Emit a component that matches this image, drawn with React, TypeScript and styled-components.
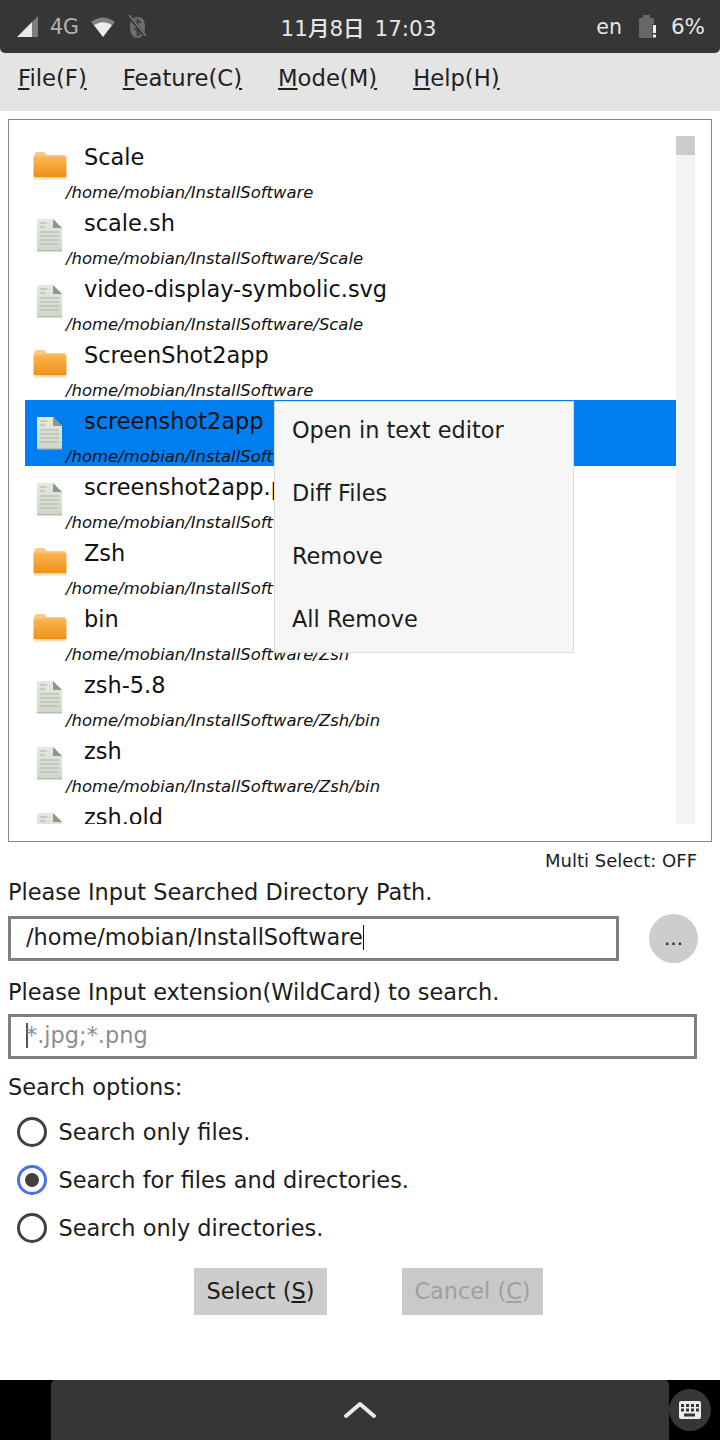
import styled, { createGlobalStyle } from "styled-components";

const GlobalStyle = createGlobalStyle`
  html, body {
    margin: 0;
    padding: 0;
    background: #fff;
  }
  * {
    box-sizing: border-box;
  }
`;

const Screen = styled.div`
  width: 720px;
  height: 1440px;
  display: flex;
  flex-direction: column;
  overflow: hidden;
  background: #fff;
  color: #1c1c1c;
  font-family: "DejaVu Sans", "Noto Sans CJK JP", sans-serif;
`;

const TopWrap = styled.div`
  background: #e4e4e4;
`;

const StatusBar = styled.header`
  height: 53px;
  padding: 0 15px 0 17px;
  display: grid;
  grid-template-columns: 1fr auto 1fr;
  align-items: center;
  background: #363636;
  border-radius: 0 0 5px 5px;
  color: #e6e6e6;
`;

const StatusGroup = styled.div<{ $end?: boolean }>`
  display: flex;
  align-items: center;
  justify-content: ${(p) => (p.$end ? "flex-end" : "flex-start")};
  gap: ${(p) => (p.$end ? "15px" : "12px")};
`;

const NetLabel = styled.span`
  font-size: 20.5px;
  color: #b4b4b4;
`;

const Clock = styled.span`
  margin-right: 5px;
  font-size: 21.5px;
  font-weight: 500;
  word-spacing: 3px;
`;

const Lang = styled.span`
  margin-right: 2px;
  font-size: 20.5px;
  font-weight: 500;
`;

const Percent = styled.span`
  font-size: 21.5px;
  font-weight: 500;
`;

const MenuBar = styled.nav`
  height: 58px;
  padding: 9px 0 0 18px;
  display: flex;
  gap: 36px;
  background: #e4e4e4;
`;

const MenuItem = styled.span`
  font-size: 22.7px;
  line-height: 32px;
  color: #222;
`;

const Main = styled.main`
  flex: 1;
  display: flex;
  flex-direction: column;
  padding: 8px 8px 0;
  position: relative;
`;

const ListFrame = styled.section`
  height: 723px;
  padding: 16px;
  padding-bottom: 17px;
  display: flex;
  border: 1px solid #888;
`;

const ListScroll = styled.div`
  flex: 1;
  overflow: hidden;
`;

const Row = styled.div<{ $selected?: boolean }>`
  height: 66px;
  display: grid;
  grid-template-columns: 59px 1fr;
  grid-template-rows: 41px 25px;
  background: ${(p) => (p.$selected ? "#007ef0" : "transparent")};
  white-space: nowrap;
`;

const IconCell = styled.div`
  grid-column: 1;
  grid-row: 1 / 3;
  padding: 15px 0 0 8px;
`;

const FileName = styled.div`
  grid-column: 2;
  grid-row: 1;
  font-size: 22.45px;
  line-height: 43px;
  color: #111;
`;

const FilePath = styled.div`
  grid-column: 1 / 3;
  grid-row: 2;
  padding-left: 41px;
  font-size: 16.45px;
  line-height: 32px;
  font-style: italic;
  color: #111;
`;

const ScrollTrack = styled.div`
  width: 19px;
  margin-left: -1px;
  background: #f3f3f3;
`;

const ScrollThumb = styled.div`
  height: 19px;
  background: #cbcbcb;
`;

const ContextMenu = styled.ul`
  position: absolute;
  left: 274px;
  top: 290px;
  width: 300px;
  height: 252px;
  margin: 0;
  padding: 0;
  list-style: none;
  background: #f6f6f6;
  border: 1px solid #dcdcdc;
`;

const ContextItem = styled.li`
  height: 63px;
  padding-left: 17px;
  font-size: 22.4px;
  line-height: 56px;
  color: #1c1c1c;
`;

const MultiSelect = styled.div`
  height: 36px;
  padding-right: 15px;
  text-align: right;
  font-size: 18px;
  line-height: 38px;
`;

const FieldLabel = styled.label`
  display: block;
  margin-bottom: 2px;
  font-size: 22.45px;
  line-height: 28px;
`;

const ExtensionLabel = styled(FieldLabel)`
  margin-bottom: 8px;
`;

const OptionsLabel = styled(FieldLabel)`
  margin-top: 14px;
`;

const PathRow = styled.div`
  display: flex;
  align-items: center;
  justify-content: space-between;
  padding-right: 14px;
  height: 54px;
  margin: 3px 0 13px;
`;

const InputBox = styled.div<{ $wide?: boolean }>`
  width: ${(p) => (p.$wide ? "689px" : "611px")};
  height: 45px;
  padding-left: 15px;
  border: 3px solid #808080;
  font-size: 22.45px;
  line-height: 37px;
  white-space: nowrap;
`;

const Caret = styled.span<{ $muted?: boolean }>`
  display: inline-block;
  width: 1.5px;
  height: 25px;
  margin-bottom: -5px;
  margin-right: ${(p) => (p.$muted ? "-1.5px" : "0")};
  background: ${(p) => (p.$muted ? "#555" : "#111")};
`;

const Placeholder = styled.span`
  color: #8e8e8e;
`;

const BrowseButton = styled.button`
  width: 49px;
  height: 49px;
  padding: 0;
  border: 0;
  border-radius: 50%;
  background: #cdcdcd;
  color: #222;
  font-family: inherit;
  font-size: 20px;
`;

const RadioGroup = styled.div`
  margin-top: 5px;
  display: flex;
  flex-direction: column;
`;

const RadioRow = styled.div`
  height: 48px;
  padding-left: 8px;
  display: flex;
  align-items: center;
  gap: 12px;
  font-size: 22.45px;
`;

const RadioMark = styled.span<{ $checked?: boolean }>`
  width: 30px;
  height: 30px;
  margin-left: 0.5px;
  display: flex;
  align-items: center;
  justify-content: center;
  border-radius: 50%;
  border: 3px solid ${(p) => (p.$checked ? "#4a6ff0" : "#404040")};
  &::after {
    content: "";
    display: ${(p) => (p.$checked ? "block" : "none")};
    width: 14px;
    height: 14px;
    border-radius: 50%;
    background: #404040;
  }
`;

const ButtonRow = styled.div`
  margin-top: 16px;
  padding-left: 186px;
  display: flex;
  gap: 75px;
`;

const ActionButton = styled.button<{ $disabled?: boolean }>`
  height: 47px;
  padding: 0 12.5px 2px;
  border: 0;
  background: ${(p) => (p.$disabled ? "#c9c9c9" : "#cdcdcd")};
  color: ${(p) => (p.$disabled ? "#a0a0a0" : "#1c1c1c")};
  font-family: inherit;
  font-size: 22.4px;
`;

const BottomBar = styled.footer`
  height: 60px;
  flex-shrink: 0;
  padding-left: 51px;
  display: flex;
  background: #000;
`;

const HandlePanel = styled.div`
  width: 618px;
  display: flex;
  align-items: center;
  justify-content: center;
  background: #363636;
  border-radius: 5px 5px 0 0;
`;

const KeyboardButton = styled.div`
  width: 42px;
  height: 42px;
  margin-top: 9px;
  display: flex;
  align-items: center;
  justify-content: center;
  border-radius: 50%;
  background: #363636;
`;

const SignalIcon = () => (
  <svg width="21" height="21" viewBox="0 0 21 21">
    <path d="M0 21 L15 21 L15 6 Z" fill="#e8e8e8" />
    <path d="M15 21 L21 21 L21 0 L15 6 Z" fill="#7c7c7c" />
  </svg>
);

const WifiIcon = () => (
  <svg width="24" height="20" viewBox="0 0 24 20">
    <path d="M0 5 Q12 -4 24 5 L12 20 Z" fill="#808080" />
    <path d="M3 8 Q12 2.5 21 8 L12 20 Z" fill="#ededed" />
  </svg>
);

const BluetoothIcon = () => (
  <svg width="21" height="24" viewBox="0 0 21 24">
    <path d="M10.5 2 C16 2 18 6 18 12 C18 19 15 23 10.5 23 C6 23 3 19 3 12 C3 6 5 2 10.5 2 Z" fill="#6e6e6e" />
    <path d="M7 13 L14 18 L10.5 20.5 L10.5 5 L14 8" fill="none" stroke="#363636" strokeWidth="1.5" />
    <path d="M2 1 L19 22" stroke="#363636" strokeWidth="3.5" />
    <path d="M2 0 L19 21" stroke="#787878" strokeWidth="1.5" />
  </svg>
);

const BatteryIcon = () => (
  <svg width="17" height="23" viewBox="0 0 17 23">
    <rect x="0" y="3" width="15" height="20" rx="1" fill="#686868" />
    <rect x="4" y="0" width="7" height="3" fill="#686868" />
    <rect x="13.5" y="9" width="4" height="14" fill="#363636" />
    <rect x="14" y="10" width="3" height="8" fill="#f0f0f0" />
    <rect x="14" y="19.5" width="3" height="3" fill="#f0f0f0" />
  </svg>
);

const SoftSvg = styled.svg`
  display: block;
  filter: blur(0.7px);
`;

const FolderIcon = () => (
  <SoftSvg width="34" height="30" viewBox="0 0 34 30">
    <defs>
      <linearGradient id="folderFill" x1="0" y1="0" x2="0" y2="1">
        <stop offset="0" stopColor="#f9b655" />
        <stop offset="1" stopColor="#ee9016" />
      </linearGradient>
    </defs>
    <path d="M3 1 L11 1 L14 4 L32 4 L32 9 L1 9 L1 4 Z" fill="#f7c987" />
    <rect x="0.5" y="5.5" width="33" height="21" rx="1" fill="url(#folderFill)" />
    <rect x="1" y="26.5" width="32" height="2" fill="#f0dcc0" />
  </SoftSvg>
);

const FileIcon = () => (
  <SoftSvg width="27" height="35" viewBox="0 0 27 35" style={{ marginLeft: 3, marginTop: 1 }}>
    <defs>
      <linearGradient id="fileFill" x1="0" y1="0" x2="0" y2="1">
        <stop offset="0" stopColor="#e4e9e0" />
        <stop offset="1" stopColor="#cfd8cb" />
      </linearGradient>
    </defs>
    <path d="M1 1 L17 1 L26 10 L26 32 L1 32 Z" fill="url(#fileFill)" />
    <path d="M17 1 L17 10 L26 10 Z" fill="#8d978a" />
    <path d="M4 5 H11 M4 9 H9 M4 14 H23 M4 18 H23 M4 22 H23 M4 26 H23" stroke="#bac2b6" strokeWidth="1.4" />
    <rect x="1" y="32" width="25" height="1.5" fill="#b5bcb1" />
  </SoftSvg>
);

const HandleChevron = () => (
  <svg width="34" height="20" viewBox="0 0 34 20">
    <path d="M3 16 L17 4 L31 16" fill="none" stroke="#e8e8e8" strokeWidth="4" strokeLinecap="round" strokeLinejoin="round" />
  </svg>
);

const KeyboardIcon = () => (
  <svg width="22" height="18" viewBox="0 0 22 18">
    <rect width="22" height="18" rx="2" fill="#ececec" />
    <path d="M2 3 h3 v3 h-3z M7 3 h3 v3 h-3z M12 3 h3 v3 h-3z M17 3 h3 v3 h-3z M2 7.5 h3 v3 h-3z M7 7.5 h3 v3 h-3z M12 7.5 h3 v3 h-3z M17 7.5 h3 v3 h-3z M5 12.5 h11 v3 h-11z" fill="#363636" />
  </svg>
);

interface FileEntry {
  name: string;
  path: string;
  isDir?: boolean;
  selected?: boolean;
}

const base = "/home/mobian/InstallSoftware";

const entries: FileEntry[] = [
  { name: "Scale", path: base, isDir: true },
  { name: "scale.sh", path: `${base}/Scale` },
  { name: "video-display-symbolic.svg", path: `${base}/Scale` },
  { name: "ScreenShot2app", path: base, isDir: true },
  { name: "screenshot2app", path: `${base}/ScreenShot2app`, selected: true },
  { name: "screenshot2app.py", path: `${base}/ScreenShot2app` },
  { name: "Zsh", path: base, isDir: true },
  { name: "bin", path: `${base}/Zsh`, isDir: true },
  { name: "zsh-5.8", path: `${base}/Zsh/bin` },
  { name: "zsh", path: `${base}/Zsh/bin` },
  { name: "zsh.old", path: `${base}/Zsh/bin` },
];

const contextItems = ["Open in text editor", "Diff Files", "Remove", "All Remove"];

const searchOptions = [
  { label: "Search only files.", checked: false },
  { label: "Search for files and directories.", checked: true },
  { label: "Search only directories.", checked: false },
];

function App() {
  return (
    <Screen>
      <GlobalStyle />
      <TopWrap>
        <StatusBar>
          <StatusGroup>
            <SignalIcon />
            <NetLabel>4G</NetLabel>
            <WifiIcon />
            <BluetoothIcon />
          </StatusGroup>
          <Clock>11月8日 17:03</Clock>
          <StatusGroup $end>
            <Lang>en</Lang>
            <BatteryIcon />
            <Percent>6%</Percent>
          </StatusGroup>
        </StatusBar>
        <MenuBar>
          <MenuItem><u>F</u>ile(F<u>)</u></MenuItem>
          <MenuItem><u>F</u>eature(C<u>)</u></MenuItem>
          <MenuItem><u>M</u>ode(M<u>)</u></MenuItem>
          <MenuItem><u>H</u>elp(H<u>)</u></MenuItem>
        </MenuBar>
      </TopWrap>
      <Main>
        <ListFrame>
          <ListScroll>
            {entries.map((entry) => (
              <Row key={entry.name} $selected={entry.selected}>
                <IconCell>{entry.isDir ? <FolderIcon /> : <FileIcon />}</IconCell>
                <FileName>{entry.name}</FileName>
                <FilePath>{entry.path}</FilePath>
              </Row>
            ))}
          </ListScroll>
          <ScrollTrack>
            <ScrollThumb />
          </ScrollTrack>
        </ListFrame>
        <ContextMenu>
          {contextItems.map((item) => (
            <ContextItem key={item}>{item}</ContextItem>
          ))}
        </ContextMenu>
        <MultiSelect>Multi Select: OFF</MultiSelect>
        <FieldLabel>Please Input Searched Directory Path.</FieldLabel>
        <PathRow>
          <InputBox>{base}<Caret /></InputBox>
          <BrowseButton>...</BrowseButton>
        </PathRow>
        <ExtensionLabel>Please Input extension(WildCard) to search.</ExtensionLabel>
        <InputBox $wide>
          <Caret $muted />
          <Placeholder>*.jpg;*.png</Placeholder>
        </InputBox>
        <OptionsLabel>Search options:</OptionsLabel>
        <RadioGroup>
          {searchOptions.map((option) => (
            <RadioRow key={option.label}>
              <RadioMark $checked={option.checked} />
              {option.label}
            </RadioRow>
          ))}
        </RadioGroup>
        <ButtonRow>
          <ActionButton>Select (<u>S</u>)</ActionButton>
          <ActionButton $disabled>Cancel (<u>C</u>)</ActionButton>
        </ButtonRow>
      </Main>
      <BottomBar>
        <HandlePanel>
          <HandleChevron />
        </HandlePanel>
        <KeyboardButton>
          <KeyboardIcon />
        </KeyboardButton>
      </BottomBar>
    </Screen>
  );
}

export default App;
